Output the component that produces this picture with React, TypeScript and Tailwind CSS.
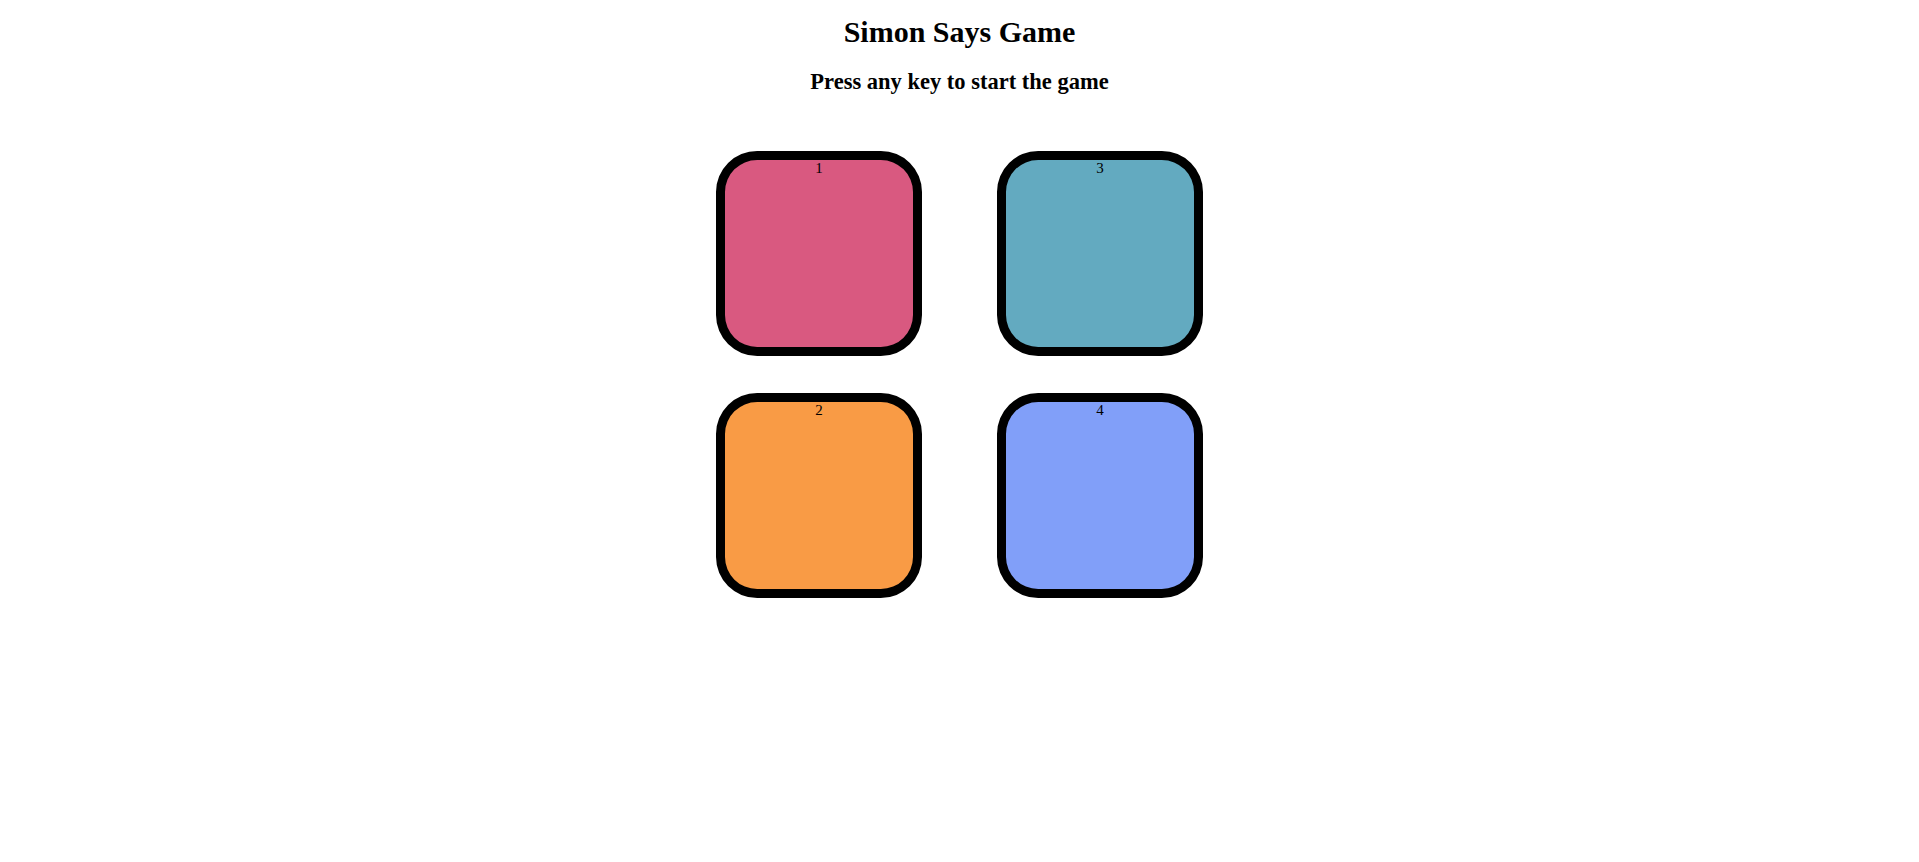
import React from "react";

const boxes = [
  { n: "1", c: "bg-[#d95980]" },
  { n: "3", c: "bg-[#63aac0]" },
  { n: "2", c: "bg-[#f99b45]" },
  { n: "4", c: "bg-[#819ff9]" },
];

export default function App() {
  return (
    <div className="min-h-screen bg-white text-black text-center text-[15px] font-['Liberation_Serif',_'Times_New_Roman',_serif]">
      <h1 className="pt-[15px] text-[30px] font-bold leading-[normal]">Simon Says Game</h1>
      <h2 className="mt-[20px] text-[22.5px] font-bold leading-[normal]">Press any key to start the game</h2>
      <div className="mx-auto mt-[56px] grid w-fit grid-cols-[206px_206px] gap-x-[75px] gap-y-[37px]">
        {boxes.map((b) => (
          <div
            key={b.n}
            className={`box-border h-[205px] w-[206px] rounded-[20%] border-[9px] border-solid border-black ${b.c}`}
          >
            <div className="text-[15px] leading-[16px]">{b.n}</div>
          </div>
        ))}
      </div>
    </div>
  );
}
